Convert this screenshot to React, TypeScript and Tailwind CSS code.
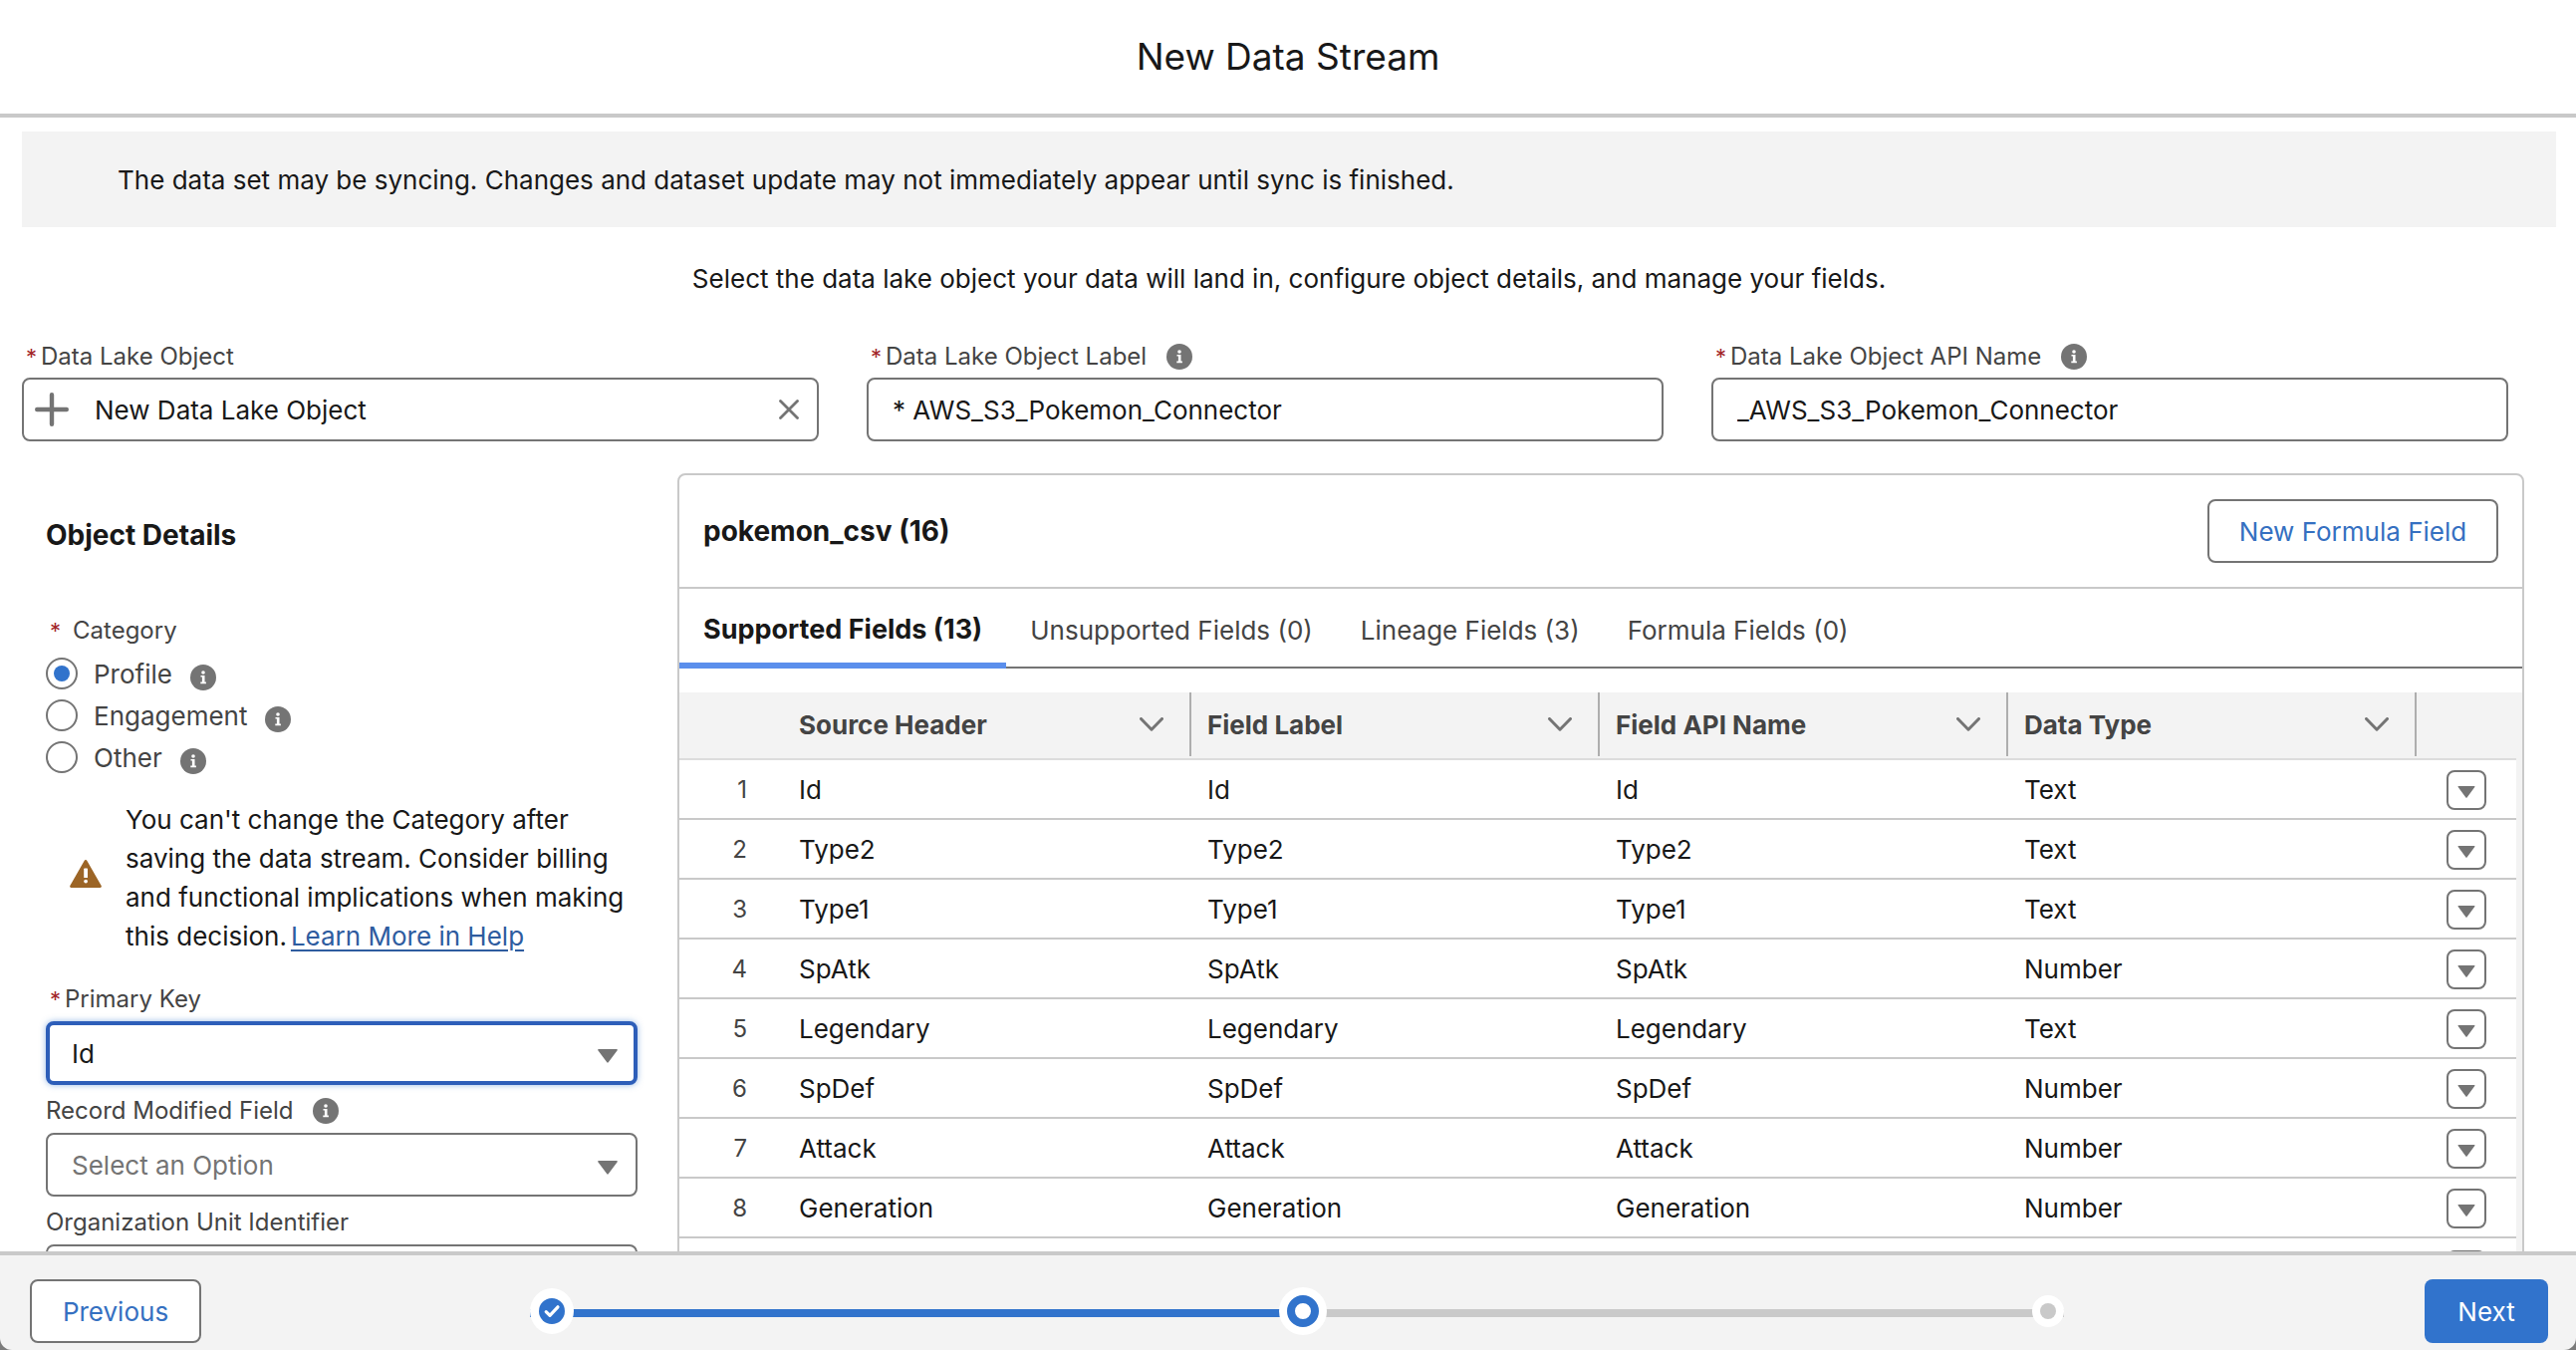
import { useState } from "react";

const fields = [
  { name: "Id", type: "Text" },
  { name: "Type2", type: "Text" },
  { name: "Type1", type: "Text" },
  { name: "SpAtk", type: "Number" },
  { name: "Legendary", type: "Text" },
  { name: "SpDef", type: "Number" },
  { name: "Attack", type: "Number" },
  { name: "Generation", type: "Number" },
];

const columns = ["Source Header", "Field Label", "Field API Name", "Data Type"];

const tabs = ["Supported Fields (13)", "Unsupported Fields (0)", "Lineage Fields (3)", "Formula Fields (0)"];

const categories = ["Profile", "Engagement", "Other"];

function InfoIcon() {
  return (
    <svg width="26" height="26" viewBox="0 0 26 26" className="shrink-0" aria-hidden="true">
      <circle cx="13" cy="13" r="13" fill="#747474" />
      <circle cx="13" cy="8" r="1.8" fill="#fff" />
      <path d="M10.5 11h4v6.6h1.4v1.6h-5.6v-1.6h1.6v-5h-1.4z" fill="#fff" />
    </svg>
  );
}

function Caret({ className }: { className?: string }) {
  return (
    <svg viewBox="0 0 20 14" className={className} fill="#747474" aria-hidden="true">
      <path d="M1 0h18a.8.8 0 0 1 .7 1.3l-9 12a.9.9 0 0 1-1.4 0l-9-12A.8.8 0 0 1 1 0z" />
    </svg>
  );
}

function Required() {
  return <span className="text-[22px] text-[#a3262b]">*</span>;
}

function TextField({ id, label, value, info }: { id: string; label: string; value: string; info?: boolean }) {
  return (
    <div className="pr-12">
      <div className="mb-0.5 flex h-[38px] items-center pl-1">
        <label htmlFor={id} className="mr-5 flex items-center gap-1">
          <Required />
          {label}
        </label>
        {info && <InfoIcon />}
      </div>
      <input
        id={id}
        defaultValue={value}
        className="h-16 w-full rounded-lg border-2 border-[#747474] bg-white px-6 text-[26px] text-[#181818] outline-none"
      />
    </div>
  );
}

function LookupField() {
  return (
    <div className="pr-12">
      <div className="mb-0.5 flex h-[38px] items-center pl-1">
        <label htmlFor="dlo" className="flex items-center gap-1">
          <Required />
          Data Lake Object
        </label>
      </div>
      <div className="flex h-16 items-center rounded-lg border-2 border-[#747474] bg-white pr-[18px] pl-[11px]">
        <svg width="34" height="34" viewBox="0 0 34 34" stroke="#747474" strokeWidth="4.4" strokeLinecap="round" aria-hidden="true">
          <path d="M17 2.2v29.6M2.2 17h29.6" />
        </svg>
        <input
          id="dlo"
          defaultValue="New Data Lake Object"
          className="ml-[26px] min-w-0 flex-1 text-[26px] text-[#181818] outline-none"
        />
        <button aria-label="Clear selection">
          <svg width="20" height="20" viewBox="0 0 20 20" stroke="#747474" strokeWidth="2.8" strokeLinecap="round">
            <path d="M1.5 1.5l17 17M18.5 1.5l-17 17" />
          </svg>
        </button>
      </div>
    </div>
  );
}

function SelectField({ id, label, option, required, info, active }: {
  id: string;
  label: string;
  option: string;
  required?: boolean;
  info?: boolean;
  active?: boolean;
}) {
  return (
    <div>
      <div className="flex h-12 items-center pt-2 pb-1">
        <label htmlFor={id} className={required ? "flex items-center gap-1 pl-1" : "mr-5"}>
          {required && <Required />}
          {label}
        </label>
        {info && <InfoIcon />}
      </div>
      <div className="relative">
        <select
          id={id}
          className={
            active
              ? "h-16 w-full appearance-none rounded-lg border-4 border-[#2d5eb9] bg-white px-[22px] text-[26px] text-[#181818] shadow-[0_0_6px_#2f73cc80] outline-none"
              : "h-16 w-full appearance-none rounded-lg border-2 border-[#747474] bg-white px-6 text-[26px] text-[#747474] outline-none"
          }
        >
          <option>{option}</option>
        </select>
        <Caret className="pointer-events-none absolute top-7 right-5 h-[14px] w-5" />
      </div>
    </div>
  );
}

function ObjectDetails() {
  const [category, setCategory] = useState("Profile");

  return (
    <section className="w-[594px] shrink-0">
      <h2 className="mt-11 text-[28px] leading-9 font-bold text-[#181818]">Object Details</h2>

      <fieldset className="mt-[60px]">
        <legend className="mb-1 flex h-9 items-center gap-3 pl-1">
          <Required />
          Category
        </legend>
        {categories.map((c) => (
          <div key={c} className="flex h-[42px] items-center">
            <label className="mr-[18px] flex items-center gap-4 text-[26px]">
              <input
                type="radio"
                name="category"
                checked={category === c}
                onChange={() => setCategory(c)}
                className="grid size-8 appearance-none place-items-center rounded-full border-2 border-[#747474] bg-white checked:before:size-4 checked:before:rounded-full checked:before:bg-[#3173cc]"
              />
              {c}
            </label>
            <div className="pt-2">
              <InfoIcon />
            </div>
          </div>
        ))}
      </fieldset>

      <div className="mt-[22px] flex items-center pl-6">
        <svg width="32" height="28" viewBox="0 0 32 28" className="mr-6 mb-2 shrink-0" aria-hidden="true">
          <path d="M14.6.9a1.6 1.6 0 0 1 2.8 0l14.3 25a1.4 1.4 0 0 1-1.2 2.1h-29a1.4 1.4 0 0 1-1.2-2.1z" fill="#9c6526" />
          <rect x="14.2" y="8.6" width="3.8" height="9.4" rx=".6" fill="#fff" />
          <circle cx="16.1" cy="21.6" r="1.9" fill="#fff" />
        </svg>
        <p className="text-[26px] leading-[39px] text-[#181818]">
          You can't change the Category after
          <br />
          saving the data stream. Consider billing
          <br />
          and functional implications when making
          <br />
          this decision.
          <a href="#help" className="ml-1 text-[#2e5c9f] underline underline-offset-4">Learn More in Help</a>
        </p>
      </div>

      <div className="mt-[18px]">
        <SelectField id="primary-key" label="Primary Key" option="Id" required active />
        <SelectField id="record-modified" label="Record Modified Field" option="Select an Option" info />
        <SelectField id="org-unit" label="Organization Unit Identifier" option="Select an Option" />
      </div>
    </section>
  );
}

function RowMenu({ label }: { label: string }) {
  return (
    <button
      aria-label={label}
      className="flex size-10 items-center justify-center rounded-lg border-2 border-[#747474] bg-white pt-1"
    >
      <Caret className="h-3 w-[18px]" />
    </button>
  );
}

function FieldsTable() {
  return (
    <div className="mt-6 bg-[#f3f3f3] pr-[6px]">
      <table className="w-full table-fixed border-separate border-spacing-0 text-left">
        <thead>
          <tr className="h-[68px]">
            <th className="w-[104px] border-b-2 border-[#dcdcdc]" aria-label="Row" />
            {columns.map((c) => (
              <th key={c} className="border-b-2 border-[#dcdcdc] p-0 pb-0.5">
                <div className="flex h-16 items-center justify-between border-r-2 border-[#aeaeae] pr-[26px] pl-4 text-[26px] font-bold">
                  {c}
                  <svg width="24" height="14" viewBox="0 0 24 14" fill="none" stroke="#747474" strokeWidth="3" strokeLinecap="round" strokeLinejoin="round" aria-hidden="true">
                    <path d="M1.5 1.5L12 12.2 22.5 1.5" />
                  </svg>
                </div>
              </th>
            ))}
            <th className="w-[100px] border-b-2 border-[#dcdcdc]" aria-label="Actions" />
          </tr>
        </thead>
        <tbody className="bg-white text-[26px] text-[#181818]">
          {fields.map((f, i) => (
            <tr key={f.name} className="h-[60px]">
              <td className="border-b-2 border-[#c9c9c9] pt-0.5 pr-9 text-right text-[24px] text-[#444]">{i + 1}</td>
              <td className="border-b-2 border-[#c9c9c9] px-4">{f.name}</td>
              <td className="border-b-2 border-[#c9c9c9] px-4">{f.name}</td>
              <td className="border-b-2 border-[#c9c9c9] px-4">{f.name}</td>
              <td className="border-b-2 border-[#c9c9c9] px-4">{f.type}</td>
              <td className="border-b-2 border-[#c9c9c9] pt-0.5 pl-[30px]">
                <RowMenu label={`Actions for ${f.name}`} />
              </td>
            </tr>
          ))}
          {/* next row, not filled in yet */}
          <tr className="h-[60px]">
            <td colSpan={5} />
            <td className="pt-1 pl-[30px]">
              <RowMenu label="Actions" />
            </td>
          </tr>
        </tbody>
      </table>
    </div>
  );
}

function FieldsCard() {
  const [active, setActive] = useState(0);

  return (
    <section className="min-w-0 flex-1 rounded-t-lg border-2 border-[#c9c9c9]">
      <div className="flex h-[114px] items-center justify-between border-b-2 border-[#c9c9c9] px-6">
        <h2 className="text-[28px] font-bold text-[#181818]">pokemon_csv (16)</h2>
        <button className="h-16 w-[292px] rounded-lg border-2 border-[#747474] bg-white text-[26px] text-[#3570c1]">
          New Formula Field
        </button>
      </div>
      <div role="tablist" className="flex h-20 border-b-2 border-[#747474]">
        {tabs.map((t, i) => (
          <button
            key={t}
            role="tab"
            aria-selected={i === active}
            onClick={() => setActive(i)}
            className={
              i === active
                ? "-mb-0.5 border-b-[6px] border-[#5b8fec] px-6 pt-2 text-[27px] font-bold text-[#181818]"
                : "px-6 pt-1 text-[26px]"
            }
          >
            {t}
          </button>
        ))}
      </div>
      <FieldsTable />
    </section>
  );
}

function Progress() {
  return (
    <div className="relative mt-2 mr-[362px] ml-[330px] flex h-12 flex-1 items-center justify-between">
      <div className="absolute inset-x-0 top-[22px] flex h-2">
        <div className="flex-1 bg-[#3173cc]" />
        <div className="flex-1 bg-[#c9c9c9]" />
      </div>
      <svg width="44" height="46" viewBox="0 0 44 46" className="relative" aria-hidden="true">
        <ellipse cx="22" cy="23" rx="22" ry="23" fill="#fff" />
        <circle cx="22" cy="23" r="13" fill="#3173cc" />
        <path d="M16.2 23.6l3.8 3.8 8-8.6" fill="none" stroke="#fff" strokeWidth="3.2" strokeLinecap="round" strokeLinejoin="round" />
      </svg>
      <svg width="48" height="48" viewBox="0 0 48 48" className="relative" aria-hidden="true">
        <circle cx="24" cy="24" r="24" fill="#fff" />
        <circle cx="24" cy="24" r="12" fill="none" stroke="#3173cc" strokeWidth="8" />
      </svg>
      <svg width="32" height="32" viewBox="0 0 32 32" className="relative" aria-hidden="true">
        <circle cx="16" cy="16" r="16" fill="#fff" />
        <circle cx="16" cy="16" r="8" fill="#c9c9c9" />
      </svg>
    </div>
  );
}

export default function App() {
  return (
    <div className="flex h-screen flex-col bg-[#7c7c7c] font-['Inter','Liberation_Sans',sans-serif] text-[24px] text-[#444]">
      <header className="flex h-[118px] shrink-0 items-center justify-center border-b-4 border-[#c9c9c9] bg-white">
        <h1 className="text-[37px] text-[#181818]">New Data Stream</h1>
      </header>

      <main className="min-h-0 flex-1 overflow-hidden bg-white pt-[14px] pr-5 pl-[22px]">
        <div className="flex h-24 items-center bg-[#f3f3f3] px-24 text-[26px] text-[#181818]">
          The data set may be syncing. Changes and dataset update may not immediately appear until sync is finished.
        </div>
        <p className="mt-8 text-center text-[26px] leading-10 text-[#181818]">
          Select the data lake object your data will land in, configure object details, and manage your fields.
        </p>

        <div className="mt-[39px] grid grid-cols-3">
          <LookupField />
          <TextField id="dlo-label" label="Data Lake Object Label" value="* AWS_S3_Pokemon_Connector" info />
          <TextField id="dlo-api" label="Data Lake Object API Name" value="_AWS_S3_Pokemon_Connector" info />
        </div>

        <div className="mt-8 flex items-start gap-10 pr-8 pl-6">
          <ObjectDetails />
          <FieldsCard />
        </div>
      </main>

      <footer className="flex shrink-0 items-start rounded-b-xl border-t-4 border-[#c9c9c9] bg-[#f3f3f3] pt-6 pr-7 pb-[7px] pl-[30px]">
        <button className="h-16 w-[172px] rounded-lg border-2 border-[#747474] bg-white text-[26px] text-[#3570c1]">
          Previous
        </button>
        <Progress />
        <button className="h-16 w-[124px] rounded-lg bg-[#3173cc] text-[26px] text-white">Next</button>
      </footer>
    </div>
  );
}
